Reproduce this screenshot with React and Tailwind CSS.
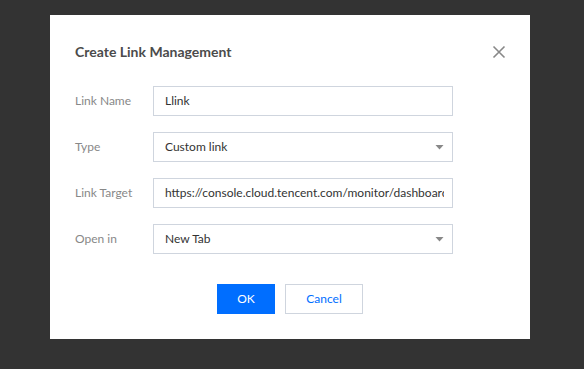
export default function App() {
    const font = { fontFamily: 'Lato, "Noto Sans", sans-serif' };

    const Caret = () => (
        <svg className="w-[9px] h-[6px] shrink-0" viewBox="0 0 9 6"><path d="M0.5 1h8L4.5 5.5z" fill="#888888" /></svg>
    );

    const rows = [
        { label: 'Link Name', value: 'Llink' },
        { label: 'Type', value: 'Custom link', select: true },
        { label: 'Link Target', value: 'https://console.cloud.tencent.com/monitor/dashboard/dashboards' },
        { label: 'Open in', value: 'New Tab', select: true },
    ];

    return (
        <div className="w-[584px] h-[369px] bg-[#333333] pt-[15px] pl-[50px]" style={font}>
            <div className="w-[480px] h-[324px] bg-white pt-[27px] px-[25px] flex flex-col">
                <div className="flex items-center justify-between h-[20px]">
                    <h3 className="text-[14px] font-bold text-[#4b4b4b] leading-[20px]">Create Link Management</h3>
                    <svg className="w-[14px] h-[14px] mr-[-1px]" viewBox="0 0 14 14" fill="none" stroke="#888888" strokeWidth="1.6">
                        <path d="M1.5 1.5l11 11M12.5 1.5l-11 11" />
                    </svg>
                </div>

                <div className="mt-[24px] flex flex-col gap-[16px]">
                    {rows.map((r) => (
                        <div key={r.label} className="flex items-center h-[30px]">
                            <span className="w-[78px] shrink-0 text-[12px] text-[#888888]">{r.label}</span>
                            <div className="w-[300px] h-[30px] border border-[#cfd5de] flex items-center pl-[11px] pr-[8px] gap-2">
                                <span className="flex-1 text-[12px] text-[#333333] whitespace-nowrap overflow-hidden">{r.value}</span>
                                {r.select && <Caret />}
                            </div>
                        </div>
                    ))}
                </div>

                <div className="mt-[30px] flex justify-center gap-[10px]">
                    <button className="w-[58px] h-[30px] bg-[#006eff] text-white text-[12px]">OK</button>
                    <button className="w-[78px] h-[30px] border border-[#cfd5de] text-[#006eff] text-[12px] bg-white">Cancel</button>
                </div>
            </div>
        </div>
    );
}
